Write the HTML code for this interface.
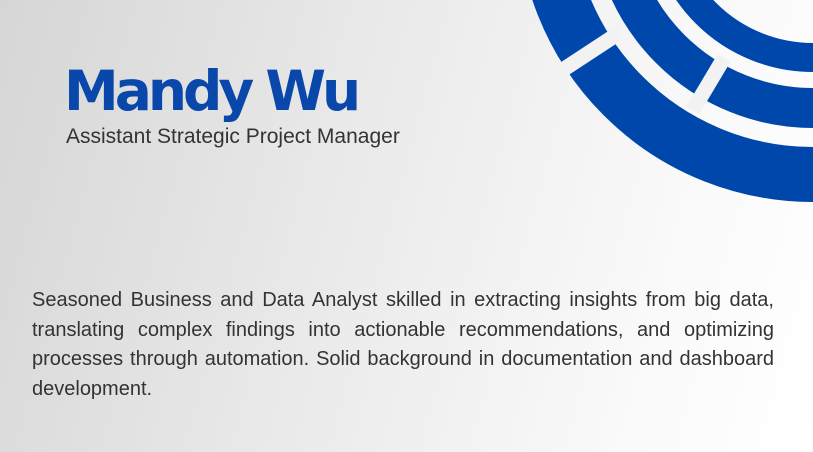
<!DOCTYPE html>
<html><head><meta charset="utf-8"><style>
html,body{margin:0;padding:0}
body{width:813px;height:452px;overflow:hidden;position:relative;background:linear-gradient(105deg,#d6d6d6 0%,#ebebeb 45%,#fafafa 80%,#ffffff 100%);font-family:"Liberation Sans",sans-serif}
svg{position:absolute;left:0;top:0}
.name{position:absolute;left:64px;top:58px;font-family:"DejaVu Sans",sans-serif;font-weight:bold;font-size:55px;color:#0a47aa;letter-spacing:-4px;line-height:66px;white-space:nowrap}
.sub{position:absolute;left:66px;top:124px;font-size:21px;color:#333;white-space:nowrap;line-height:26px}
.p{position:absolute;left:32px;top:286px;width:742px;font-size:20px;line-height:29.5px;color:#333;text-align:justify}
</style></head><body>
<svg width="813" height="452" viewBox="0 0 813 452">
<g fill="none" stroke="#0047ab">
<circle cx="813" cy="-94" r="268.5" stroke-width="55"/>
<circle cx="813" cy="-94" r="202" stroke-width="40"/>
<circle cx="813" cy="-94" r="151.5" stroke-width="29"/>
</g>
<g stroke="#f2f2f2" stroke-width="15">
<line x1="619" y1="33" x2="555" y2="75" />
<line x1="724" y1="58" x2="693" y2="110" />
</g>
</svg>
<div class="name">Mandy Wu</div>
<div class="sub">Assistant Strategic Project Manager</div>
<div class="p">Seasoned Business and Data Analyst skilled in extracting insights from big data, translating complex findings into actionable recommendations, and optimizing processes through automation. Solid background in documentation and dashboard development.</div>
</body></html>
